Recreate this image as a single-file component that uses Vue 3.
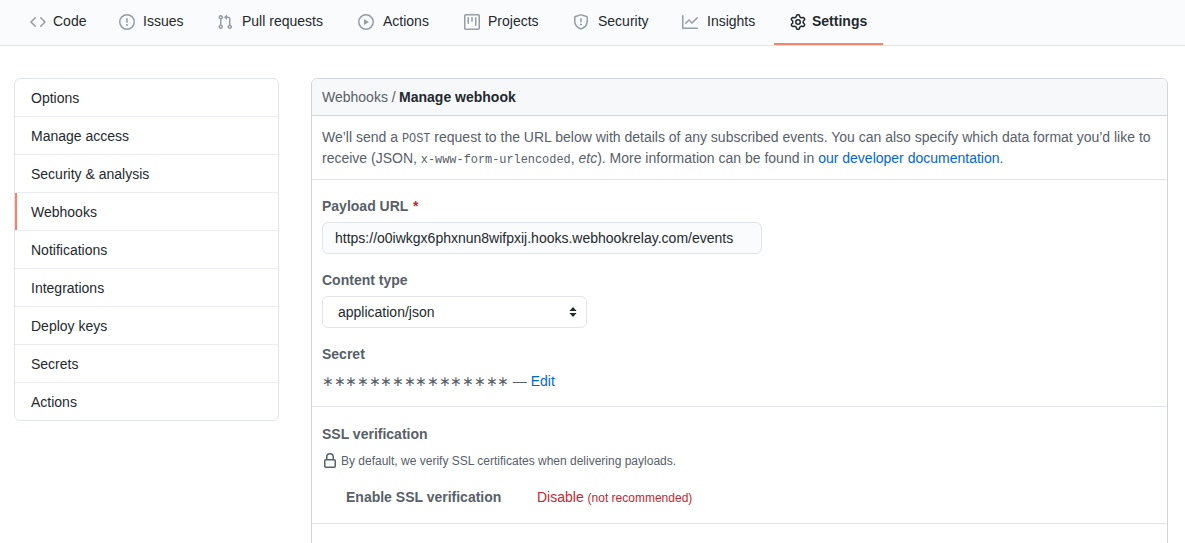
<script setup>
const tabs = [
  { label: 'Code', gap: 7, width: 89, d: 'M4.72 3.22a.75.75 0 011.06 1.06L2.06 8l3.72 3.72a.75.75 0 11-1.06 1.06L.47 8.53a.75.75 0 010-1.06l4.25-4.25zm6.56 0a.75.75 0 10-1.06 1.06L13.94 8l-3.72 3.72a.75.75 0 101.06 1.06l4.25-4.25a.75.75 0 000-1.06l-4.25-4.25z' },
  { label: 'Issues', gap: 8, width: 98, d: 'M8 1.5a6.5 6.5 0 100 13 6.5 6.5 0 000-13zM0 8a8 8 0 1116 0A8 8 0 010 8zm9 3a1 1 0 11-2 0 1 1 0 012 0zm-.25-6.25a.75.75 0 00-1.5 0v3.5a.75.75 0 001.5 0v-3.5z' },
  { label: 'Pull requests', gap: 9, width: 141, d: 'M7.177 3.073L9.573.677A.25.25 0 0110 .854v4.792a.25.25 0 01-.427.177L7.177 3.427a.25.25 0 010-.354zM3.75 2.5a.75.75 0 100 1.5.75.75 0 000-1.5zm-2.25.75a2.25 2.25 0 113 2.122v5.256a2.251 2.251 0 11-1.5 0V5.372A2.25 2.25 0 011.5 3.25zM11 2.5h-1V4h1a1 1 0 011 1v5.628a2.251 2.251 0 101.5 0V5A2.5 2.5 0 0011 2.5zm1 10.25a.75.75 0 111.5 0 .75.75 0 01-1.5 0zM3.75 12a.75.75 0 100 1.5.75.75 0 000-1.5z' },
  { label: 'Actions', gap: 9, width: 106, d: 'M1.5 8a6.5 6.5 0 1113 0 6.5 6.5 0 01-13 0zM8 0a8 8 0 100 16A8 8 0 008 0zM6.379 5.227A.25.25 0 006 5.442v5.117a.25.25 0 00.379.214l4.264-2.559a.25.25 0 000-.428L6.379 5.227z' },
  { label: 'Projects', gap: 8, width: 109, d: 'M1.75 0A1.75 1.75 0 000 1.75v12.5C0 15.216.784 16 1.75 16h12.5A1.75 1.75 0 0016 14.25V1.75A1.75 1.75 0 0014.25 0H1.75zM1.5 1.75a.25.25 0 01.25-.25h12.5a.25.25 0 01.25.25v12.5a.25.25 0 01-.25.25H1.75a.25.25 0 01-.25-.25V1.75zM11.75 3a.75.75 0 00-.75.75v7.5a.75.75 0 001.5 0v-7.5a.75.75 0 00-.75-.75zm-8.25.75a.75.75 0 011.5 0v5.5a.75.75 0 01-1.5 0v-5.5zM8 3a.75.75 0 00-.75.75v3.5a.75.75 0 001.5 0v-3.5A.75.75 0 008 3z' },
  { label: 'Security', gap: 9, width: 109, d: 'M7.467.133a1.75 1.75 0 011.066 0l5.25 1.68A1.75 1.75 0 0115 3.48V7c0 1.566-.32 3.182-1.303 4.682-.983 1.498-2.585 2.813-5.032 3.855a1.7 1.7 0 01-1.33 0c-2.447-1.042-4.049-2.357-5.032-3.855C1.32 10.182 1 8.566 1 7V3.48a1.75 1.75 0 011.217-1.667l5.25-1.68zm.61 1.429a.25.25 0 00-.153 0l-5.25 1.68a.25.25 0 00-.174.238V7c0 1.358.275 2.666 1.057 3.86.784 1.194 2.121 2.34 4.366 3.297a.2.2 0 00.154 0c2.245-.956 3.582-2.104 4.366-3.298C13.225 9.666 13.5 8.36 13.5 7V3.48a.25.25 0 00-.174-.237l-5.25-1.68zM9 10.5a1 1 0 11-2 0 1 1 0 012 0zm-.25-5.75a.75.75 0 10-1.5 0v3a.75.75 0 001.5 0v-3z' },
  { label: 'Insights', gap: 9, width: 108, d: 'M1.5 1.75a.75.75 0 00-1.5 0v12.5c0 .414.336.75.75.75h14.5a.75.75 0 000-1.5H1.5V1.75zm14.28 2.53a.75.75 0 00-1.06-1.06L10 7.94 7.53 5.47a.75.75 0 00-1.06 0L3.22 8.72a.75.75 0 001.06 1.06L7 7.06l2.47 2.47a.75.75 0 001.06 0l5.25-5.25z' },
  { label: 'Settings', gap: 6, width: 109, active: true, d: 'M7.429 1.525a6.593 6.593 0 011.142 0c.036.003.108.036.137.146l.289 1.105c.147.56.55.967.997 1.189.174.086.341.183.501.29.417.278.97.423 1.53.27l1.102-.303c.11-.03.175.016.195.046.219.31.41.641.573.989.014.031.022.11-.059.19l-.815.806c-.411.406-.562.957-.53 1.456a4.588 4.588 0 010 .582c-.032.499.119 1.05.53 1.456l.815.806c.08.08.073.159.059.19a6.494 6.494 0 01-.573.99c-.02.029-.086.074-.195.045l-1.103-.303c-.559-.153-1.112-.008-1.529.27-.16.107-.327.204-.5.29-.449.222-.851.628-.998 1.189l-.289 1.105c-.029.11-.101.143-.137.146a6.613 6.613 0 01-1.142 0c-.036-.003-.108-.037-.137-.146l-.289-1.105c-.147-.56-.55-.967-.997-1.189a4.502 4.502 0 01-.501-.29c-.417-.278-.97-.423-1.53-.27l-1.102.303c-.11.03-.175-.016-.195-.046a6.492 6.492 0 01-.573-.989c-.014-.031-.022-.11.059-.19l.815-.806c.411-.406.562-.957.53-1.456a4.587 4.587 0 010-.582c.032-.499-.119-1.05-.53-1.456l-.815-.806c-.08-.08-.073-.159-.059-.19a6.44 6.44 0 01.573-.99c.02-.029.086-.075.195-.045l1.103.303c.559.153 1.112.008 1.529-.27.16-.107.327-.204.5-.29.449-.222.851-.628.998-1.189l.289-1.105c.029-.11.101-.143.137-.146zM8 0c-.236 0-.47.01-.701.03-.743.065-1.29.615-1.458 1.261l-.29 1.106c-.017.066-.078.158-.211.224a5.994 5.994 0 00-.668.386c-.123.082-.233.09-.3.071L3.27 2.776c-.644-.177-1.392.02-1.82.63a7.977 7.977 0 00-.704 1.217c-.315.675-.111 1.422.363 1.891l.815.806c.05.048.098.147.088.294a6.084 6.084 0 000 .772c.01.147-.038.246-.088.294l-.815.806c-.474.469-.678 1.216-.363 1.891.2.428.436.835.704 1.218.428.609 1.176.806 1.82.63l1.103-.303c.066-.019.176-.011.299.071.213.143.436.272.668.386.133.066.194.158.212.224l.289 1.106c.169.646.715 1.196 1.458 1.26a8.094 8.094 0 001.402 0c.743-.064 1.29-.614 1.458-1.26l.29-1.106c.017-.066.078-.158.211-.224a5.98 5.98 0 00.668-.386c.123-.082.233-.09.3-.071l1.102.302c.644.177 1.392-.02 1.82-.63.268-.382.505-.789.704-1.217.315-.675.111-1.422-.364-1.891l-.814-.806c-.05-.048-.098-.147-.088-.294a6.1 6.1 0 000-.772c-.01-.147.039-.246.088-.294l.814-.806c.475-.469.679-1.216.364-1.891a7.992 7.992 0 00-.704-1.218c-.428-.609-1.176-.806-1.82-.63l-1.103.303c-.066.019-.176.011-.299-.071a5.991 5.991 0 00-.668-.386c-.133-.066-.194-.158-.212-.224L10.16 1.29C9.99.645 9.444.095 8.701.031A8.094 8.094 0 008 0zm1.5 8a1.5 1.5 0 11-3 0 1.5 1.5 0 013 0zM11 8a3 3 0 11-6 0 3 3 0 016 0z' }
]
const menu = ['Options', 'Manage access', 'Security & analysis', 'Webhooks', 'Notifications', 'Integrations', 'Deploy keys', 'Secrets', 'Actions']
const lock = 'M4 4v2h-.25A1.75 1.75 0 002 7.75v5.5c0 .966.784 1.75 1.75 1.75h8.5A1.75 1.75 0 0014 13.25v-5.5A1.75 1.75 0 0012.25 6H12V4a4 4 0 10-8 0zm6.5 2V4a2.5 2.5 0 00-5 0v2h5zM12 7.5h.25a.25.25 0 01.25.25v5.5a.25.25 0 01-.25.25h-8.5a.25.25 0 01-.25-.25v-5.5a.25.25 0 01.25-.25H12z'
</script>

<template>
  <div class="page">
    <nav class="tabs">
      <a v-for="t in tabs" :key="t.label" class="tab" :class="{ active: t.active }" :style="{ gap: t.gap + 'px', width: t.width + 'px' }">
        <svg class="tab-icon" viewBox="0 0 16 16" width="16" height="16"><path fill-rule="evenodd" :d="t.d" /></svg>
        <span>{{ t.label }}</span>
      </a>
    </nav>
    <div class="layout">
      <aside class="menu">
        <a v-for="m in menu" :key="m" class="menu-item" :class="{ selected: m === 'Webhooks' }">{{ m }}</a>
      </aside>
      <main class="panel">
        <header class="panel-head">Webhooks / <strong>Manage webhook</strong></header>
        <section class="intro">
          We’ll send a <code>POST</code> request to the URL below with details of any subscribed events. You can also specify which data format you’d like to receive (JSON, <code>x-www-form-urlencoded</code>, <em>etc</em>). More information can be found in <a class="link">our developer documentation</a>.
        </section>
        <section class="form">
          <label class="field-label">Payload URL <span class="req">*</span></label>
          <input class="url" type="text" readonly value="https://o0iwkgx6phxnun8wifpxij.hooks.webhookrelay.com/events" />
          <label class="field-label second">Content type</label>
          <div class="select-wrap">
            <select class="select"><option>application/json</option></select>
            <svg class="arrows" viewBox="0 0 8 12" width="8" height="12"><path d="M4 1 7.6 5H.4zM4 11 .4 7h7.2z" /></svg>
          </div>
          <label class="field-label third">Secret</label>
          <div class="secret"><span class="stars">∗∗∗∗∗∗∗∗∗∗∗∗∗∗∗∗</span> — <a class="link">Edit</a></div>
        </section>
        <section class="ssl">
          <h3 class="field-label">SSL verification</h3>
          <p class="note">
            <svg class="lock" viewBox="0 0 16 16" width="16" height="16"><path fill-rule="evenodd" :d="lock" /></svg>
            <span>By default, we verify SSL certificates when delivering payloads.</span>
          </p>
          <div class="ssl-row">
            <span class="ssl-name">Enable SSL verification</span>
            <a class="danger">Disable <small>(not recommended)</small></a>
          </div>
        </section>
        <section class="rest"></section>
      </main>
    </div>
  </div>
</template>

<style>
html, body { margin: 0; overflow: hidden; background: #fff; }
</style>

<style scoped>
.page {
  height: 543px;
  overflow: hidden;
  font-family: "Liberation Sans", Arial, sans-serif;
  font-size: 14px;
  line-height: 21px;
  color: #24292e;
}
.tabs {
  display: flex;
  height: 45px;
  padding-left: 14px;
  background: #fafbfc;
  border-bottom: 1px solid #e1e4e8;
}
.tab {
  display: flex;
  align-items: center;
  flex: none;
  height: 45px;
  padding: 0 0 0 16px;
  box-sizing: border-box;
  border-bottom: 2px solid transparent;
}
.tab-icon { fill: #959da5; flex: none; }
.tab.active { font-weight: 600; border-bottom-color: #f9826c; }
.tab.active .tab-icon { fill: #24292e; }
.layout {
  display: flex;
  gap: 32px;
  padding: 32px 17px 0 14px;
  align-items: flex-start;
}
.menu {
  width: 265px;
  flex: none;
  box-sizing: border-box;
  border: 1px solid #e1e4e8;
  border-radius: 6px;
  overflow: hidden;
}
.menu-item {
  display: block;
  height: 38px;
  box-sizing: border-box;
  padding: 9px 16px 7px;
  border-bottom: 1px solid #eaecef;
}
.menu-item:last-child { height: 37px; border-bottom: 0; }
.menu-item.selected {
  box-shadow: inset 2px 0 0 #f9826c;
}
.panel {
  flex: 1;
  min-width: 0;
  border: 1px solid #d1d5da;
  border-radius: 6px;
}
.panel-head {
  height: 37px;
  box-sizing: border-box;
  padding: 8px 10px;
  background: #f6f8fa;
  border-bottom: 1px solid #d1d5da;
  border-radius: 5px 5px 0 0;
  color: #586069;
}
.panel-head strong { color: #24292e; font-weight: 600; margin-left: -0.5px; }
.intro {
  padding: 11px 10px 0;
  height: 64px;
  box-sizing: border-box;
  color: #586069;
  border-bottom: 1px solid #e1e4e8;
}
code {
  font-family: "Liberation Mono", monospace;
  font-size: 11.9px;
  line-height: 1;
}
.link { color: #0366d6; }
.form {
  padding: 16px 10px 0;
  border-bottom: 1px solid #e1e4e8;
  height: 227px;
  box-sizing: border-box;
}
.field-label {
  display: block;
  margin: 0;
  font-size: 14px;
  line-height: 21px;
  font-weight: 600;
  color: #586069;
}
.req { color: #cb2431; margin-left: 1px; }
.url {
  display: block;
  box-sizing: border-box;
  width: 440px;
  height: 32px;
  margin-top: 5px;
  padding: 5px 12px;
  border: 1px solid #e1e4e8;
  border-radius: 6px;
  background: #fafbfc;
  font: 14px/20px "Liberation Sans", Arial, sans-serif;
  color: #24292e;
  outline: none;
}
.second { margin-top: 16px; }
.select-wrap {
  position: relative;
  width: 265px;
  margin-top: 5px;
}
.select {
  display: block;
  width: 100%;
  height: 32px;
  box-sizing: border-box;
  padding: 5px 24px 5px 15px;
  border: 1px solid #e1e4e8;
  border-radius: 6px;
  background: #fff;
  appearance: none;
  font: 14px/20px "Liberation Sans", Arial, sans-serif;
  color: #24292e;
}
.arrows {
  position: absolute;
  right: 10px;
  top: 10px;
  fill: #24292e;
  pointer-events: none;
}
.third { margin-top: 16px; }
.secret {
  margin-top: 6px;
  color: #586069;
}
.stars { letter-spacing: -0.32px; }
.ssl {
  padding: 17px 10px 0;
  height: 117px;
  box-sizing: border-box;
  border-bottom: 1px solid #e1e4e8;
}
.note {
  display: flex;
  align-items: center;
  gap: 3px;
  margin: 7px 0 0;
  font-size: 12px;
  line-height: 18px;
  color: #586069;
}
.lock { fill: #586069; flex: none; }
.ssl-row {
  display: flex;
  margin: 17px 0 0 24px;
}
.ssl-name {
  width: 191px;
  font-weight: 600;
  color: #586069;
}
.danger { color: #cb2431; }
.danger small { font-size: 12px; }
.rest { height: 60px; }
</style>
